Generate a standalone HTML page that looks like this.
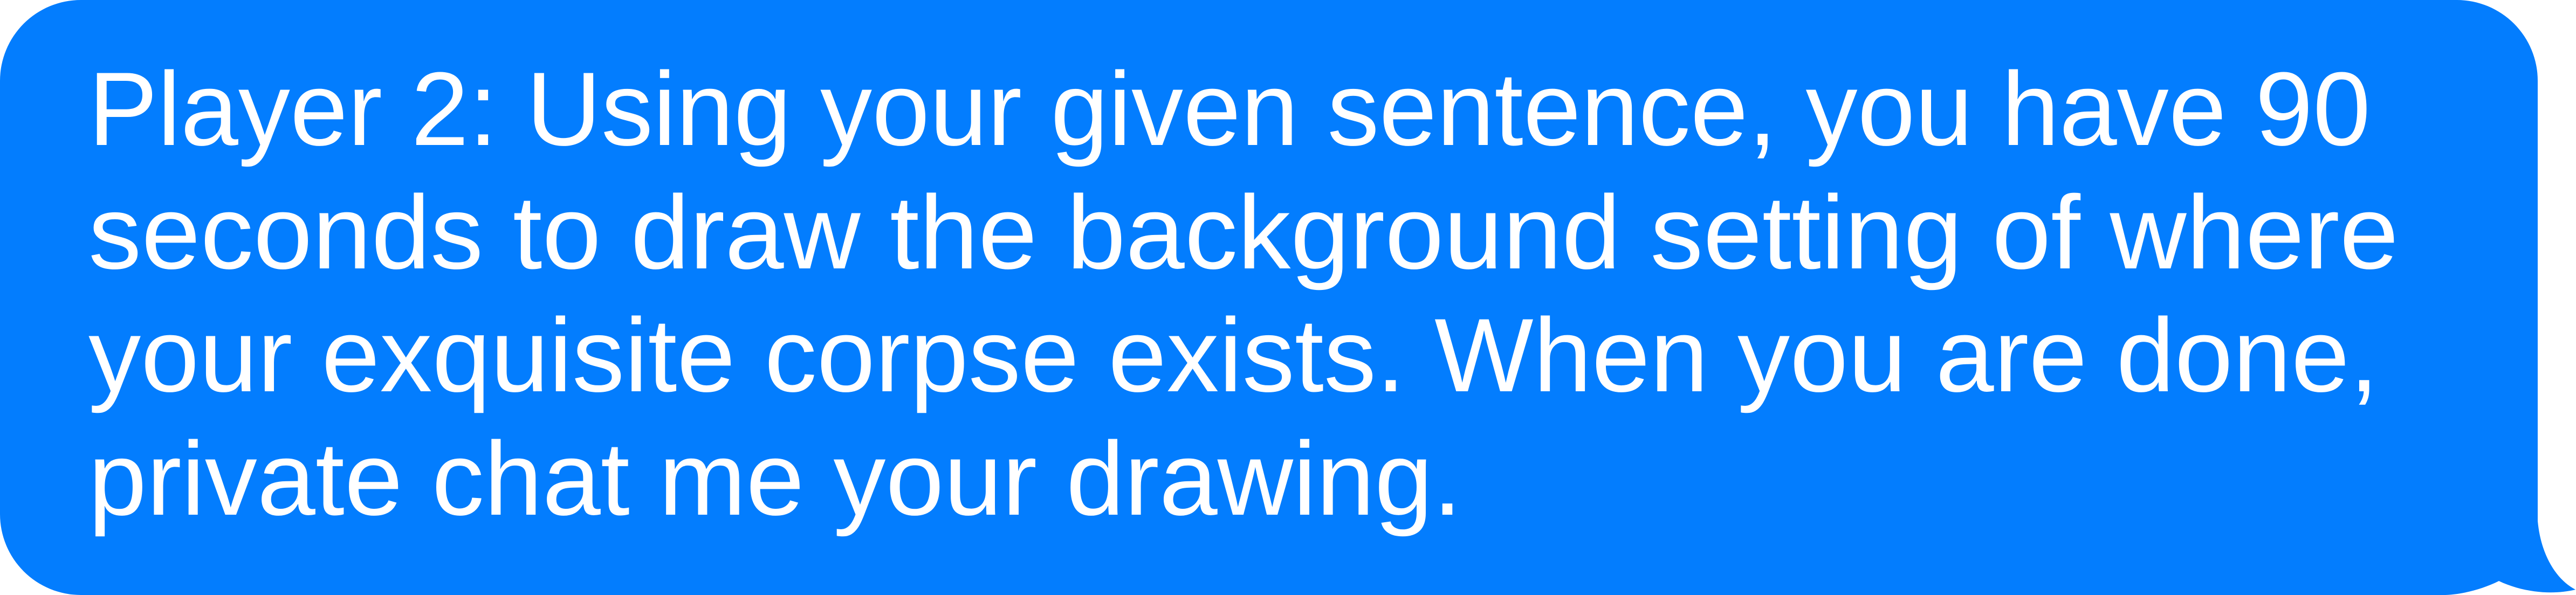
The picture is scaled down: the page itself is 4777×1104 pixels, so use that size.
<!DOCTYPE html>
<html><head><meta charset="utf-8"><style>
html,body{margin:0;padding:0;background:#fff;width:4777px;height:1104px;overflow:hidden}
svg{display:block}
text{font-family:"Liberation Sans",Arial,sans-serif;font-size:194px;fill:#fff}
</style></head><body>
<svg width="4777" height="1104" viewBox="0 0 4777 1104">
<path fill="#037dfe" d="M150,0 H4556 A150 150 0 0 1 4706 150 V967 C4712 1030 4740 1075 4776 1094 C4735 1104 4680 1100 4634 1078 C4600 1095 4560 1104 4530 1104 H150 A150 150 0 0 1 0 954 V150 A150 150 0 0 1 150 0 Z"/>
<text x="164" y="269" textLength="4232" lengthAdjust="spacingAndGlyphs">Player 2: Using your given sentence, you have 90</text>
<text x="164" y="498" textLength="4284" lengthAdjust="spacingAndGlyphs">seconds to draw the background setting of where</text>
<text x="164" y="726" textLength="4247" lengthAdjust="spacingAndGlyphs">your exquisite corpse exists. When you are done,</text>
<text x="164" y="955" textLength="2547" lengthAdjust="spacingAndGlyphs">private chat me your drawing.</text>
</svg>
</body></html>
